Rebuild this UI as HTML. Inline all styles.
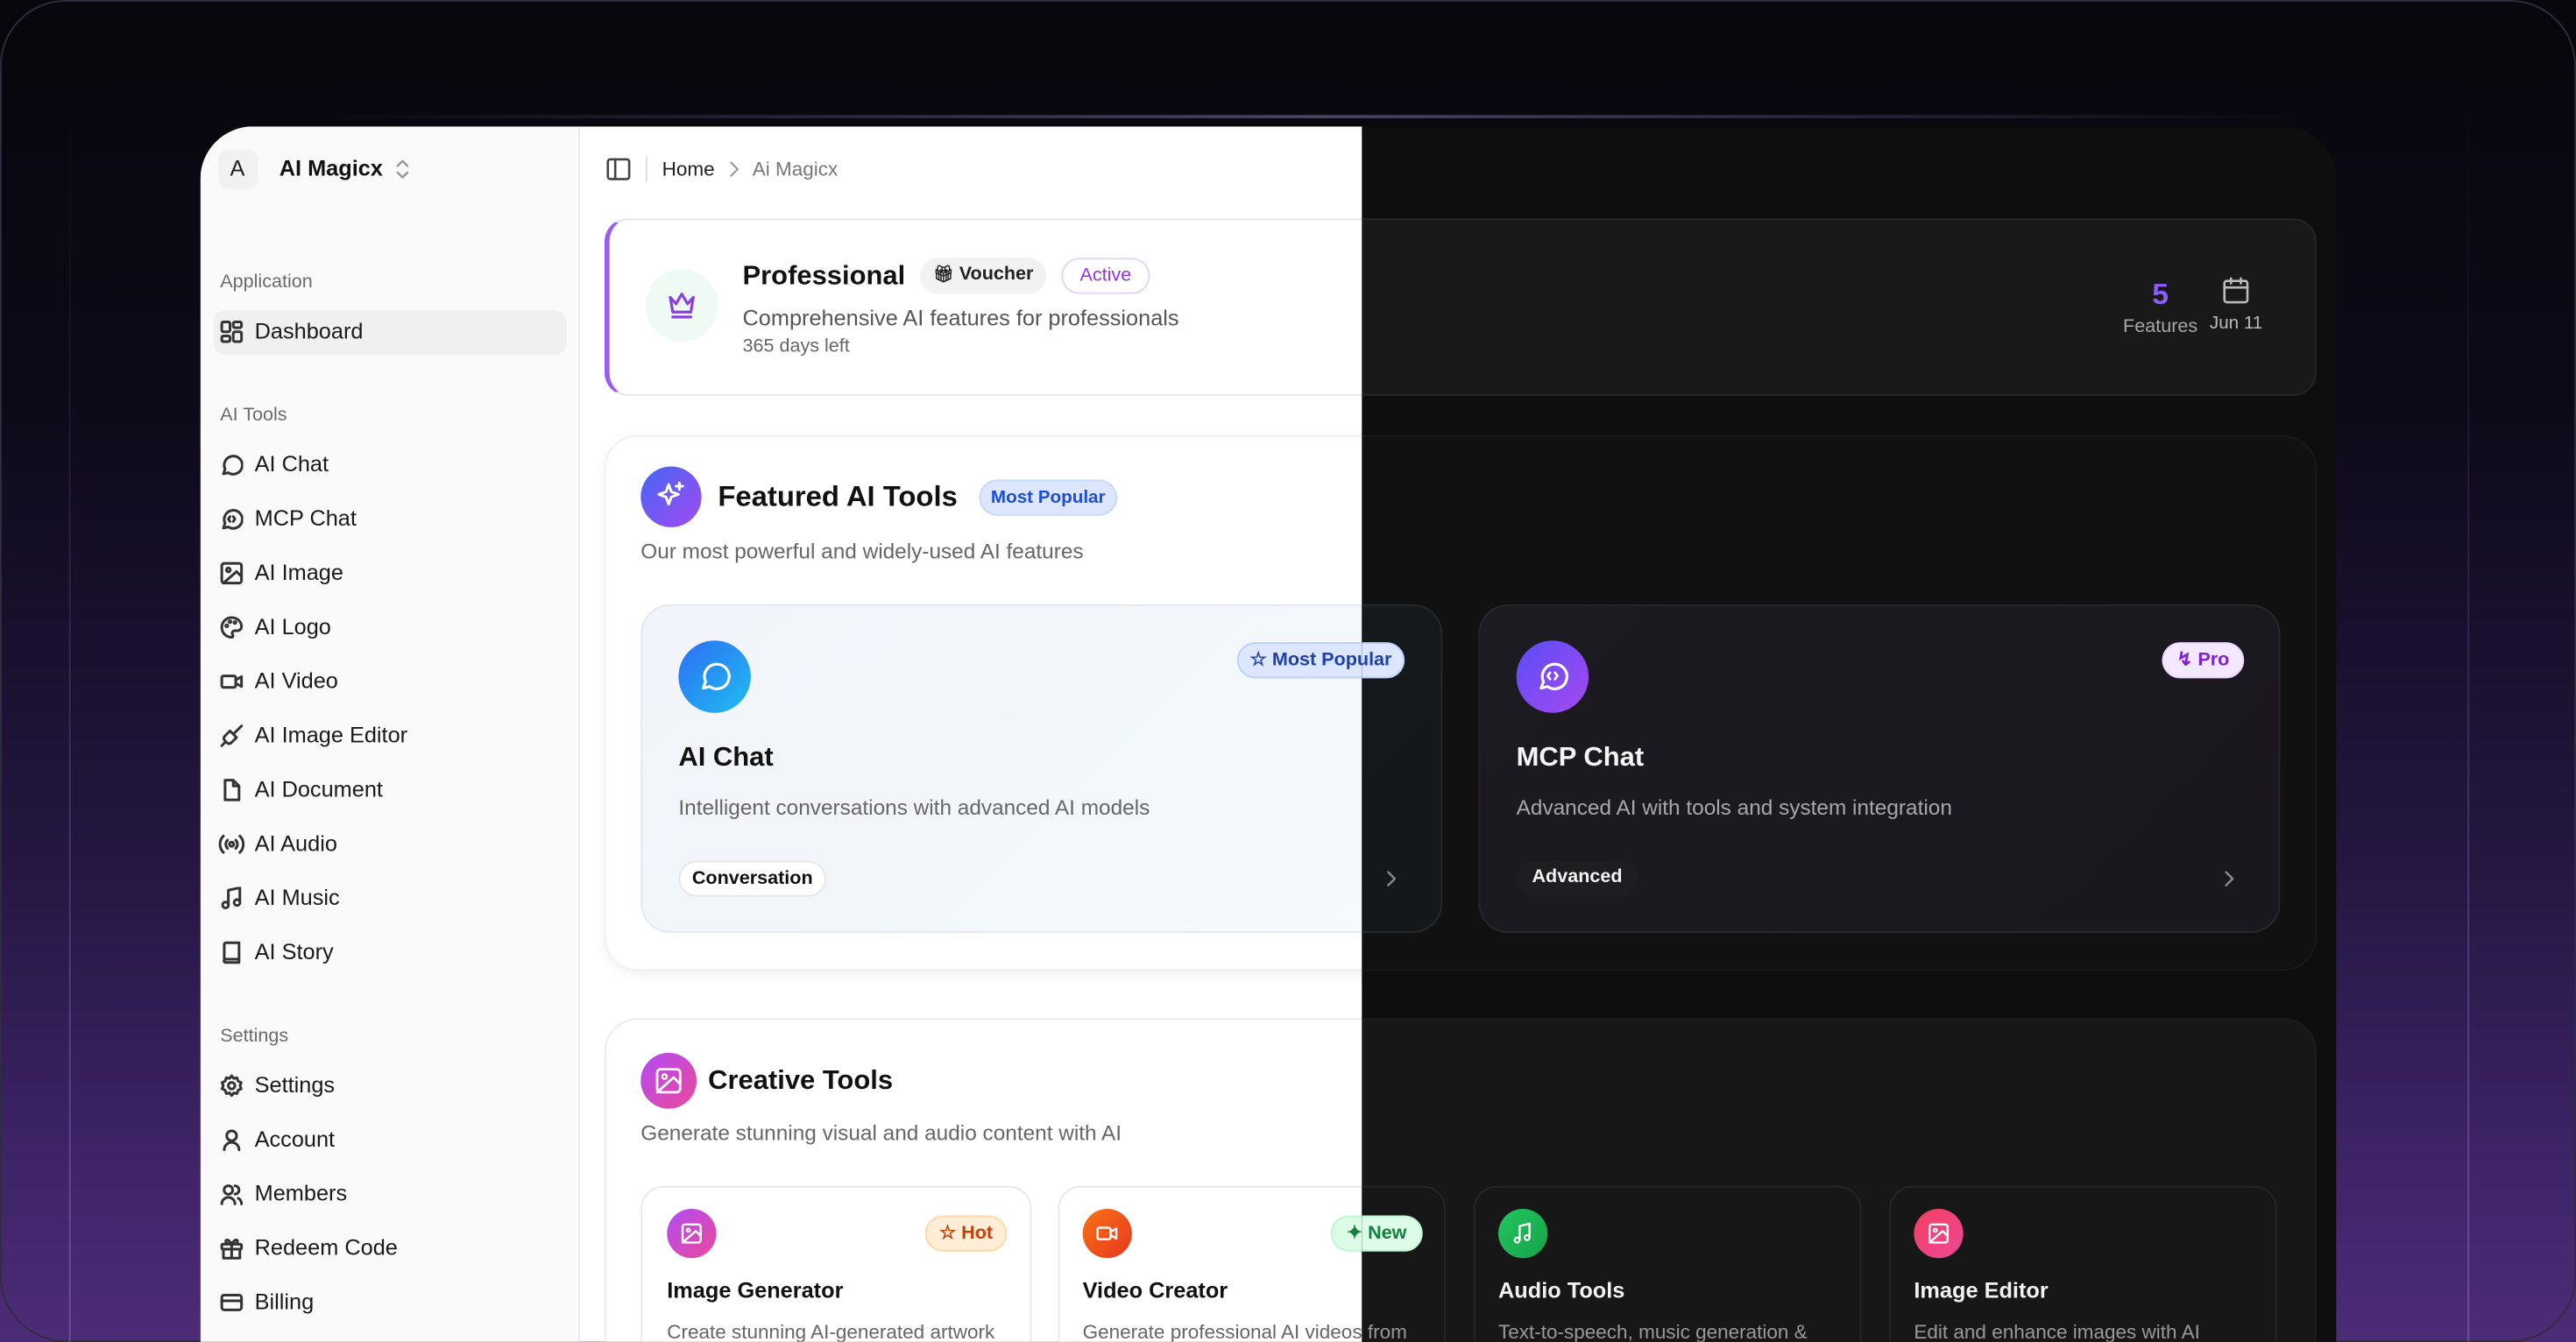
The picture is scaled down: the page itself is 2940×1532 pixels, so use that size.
<!DOCTYPE html>
<html><head><meta charset="utf-8"><style>
*{margin:0;padding:0;box-sizing:border-box}
html,body{width:2940px;height:1532px;overflow:hidden;background:#07070d}
#s{position:absolute;left:0;top:0;width:1568px;height:817px;transform:scale(1.875);transform-origin:0 0;font-family:"Liberation Sans",sans-serif;overflow:hidden;
background:linear-gradient(180deg,#07070d 0%,#0d0a18 30%,#251742 65%,#40256a 88%,#4c2c76 100%)}
.a{position:absolute;white-space:nowrap}
.t{position:absolute;white-space:nowrap;line-height:20px;height:20px}
svg{position:absolute;fill:none;stroke-linecap:round;stroke-linejoin:round}
.frame{position:absolute;left:0;top:0;width:1568px;height:817px;border:1.5px solid #2e2e3e;border-radius:40px}
.vl{position:absolute;top:60px;width:1px;height:757px;background:linear-gradient(180deg,rgba(120,100,170,0),rgba(140,110,190,.55))}
.win{position:absolute;left:122px;top:77px;width:1300px;height:740px;border-radius:32px 32px 0 0;overflow:hidden;background:#0e0e0e}
.light{position:absolute;left:0;top:0;width:707px;height:740px;overflow:hidden;background:#fff}
.dark{position:absolute;left:707px;top:0;width:593px;height:740px;overflow:hidden;background:#0e0e0e}
.inner{position:absolute;left:-122px;top:-77px;width:1568px;height:817px;overflow:hidden}
.dark .inner{left:-829px}
.side{position:absolute;left:122px;top:77px;width:231px;height:740px;background:#fafafa;border-right:1px solid #ebebeb}
.si{font-size:13.5px;color:#1a1a1a}
.sl{font-size:11.5px;color:#6b6b6b}
.ic{stroke:#333;stroke-width:1.6}
.pill{position:absolute;border-radius:11px;font-size:11.5px;font-weight:bold;text-align:center;line-height:20px;height:22px}
.circ{position:absolute;border-radius:50%}
</style></head><body><div id="s">
<div class="frame"></div>
<div class="a" style="left:200px;top:70px;width:1200px;height:2px;background:linear-gradient(90deg,rgba(90,90,120,0),rgba(110,110,150,.6),rgba(90,90,120,0))"></div>
<div class="vl" style="left:42px"></div>
<div class="vl" style="left:1502px"></div>

<div class="win">
<div class="light"><div class="inner">
<div class="side"></div>
<div class="a" style="left:133px;top:91px;width:24px;height:24px;border-radius:6px;background:#f1f1f1"></div>
<div class="t" style="left:140px;top:93px;font-size:13.5px;color:#222">A</div>
<div class="t" style="left:170px;top:93px;font-size:13.5px;font-weight:bold;color:#111">AI Magicx</div>
<svg style="left:240px;top:96px" width="10" height="14" viewBox="0 0 10 14"><path d="M2 5l3-3 3 3M2 9l3 3 3-3" stroke="#999" stroke-width="1.3"/></svg>

<div class="t sl" style="left:134px;top:162px">Application</div>
<div class="a" style="left:130px;top:189px;width:215px;height:27px;background:#f0f0f0;border-radius:7px"></div>
<svg class="ic" style="left:134px;top:195px" width="14" height="14" viewBox="0 0 14 14"><rect x="1" y="1" width="5" height="6" rx="1"/><rect x="8" y="1" width="5" height="3.5" rx="1"/><rect x="8" y="7" width="5" height="6" rx="1"/><rect x="1" y="9.5" width="5" height="3.5" rx="1"/></svg>
<div class="t si" style="left:155px;top:192px;font-weight:500">Dashboard</div>

<div class="t sl" style="left:134px;top:243px">AI Tools</div>
<svg class="ic" style="left:134px;top:276px" width="14" height="14" viewBox="0 0 14 14"><path d="M2 12.5l1-3A5.5 5.5 0 1 1 5 11.8z"/></svg>
<div class="t si" style="left:155px;top:273px">AI Chat</div>
<svg class="ic" style="left:134px;top:309px" width="14" height="14" viewBox="0 0 14 14"><path d="M2 12.5l1-3A5.5 5.5 0 1 1 5 11.8z"/><path d="M6 5.5l-1 1.5 1 1.5M8 5.5l1 1.5-1 1.5"/></svg>
<div class="t si" style="left:155px;top:306px">MCP Chat</div>
<svg class="ic" style="left:134px;top:342px" width="14" height="14" viewBox="0 0 14 14"><rect x="1" y="1" width="12" height="12" rx="1.5"/><circle cx="5" cy="5" r="1.2"/><path d="M13 9l-3-3-8 7"/></svg>
<div class="t si" style="left:155px;top:339px">AI Image</div>
<svg class="ic" style="left:134px;top:375px" width="14" height="14" viewBox="0 0 14 14"><path d="M7 1a6 6 0 1 0 0 12c1 0 1-1 .5-1.8S7.6 9 9 9h1.5A2.5 2.5 0 0 0 13 6.5C13 3.5 10.3 1 7 1z"/><circle cx="4" cy="6" r=".6"/><circle cx="6" cy="3.5" r=".6"/><circle cx="9" cy="4" r=".6"/></svg>
<div class="t si" style="left:155px;top:372px">AI Logo</div>
<svg class="ic" style="left:134px;top:408px" width="14" height="14" viewBox="0 0 14 14"><rect x="1" y="3.5" width="8.5" height="7" rx="1.2"/><path d="M9.5 6l3.5-2v6l-3.5-2"/></svg>
<div class="t si" style="left:155px;top:405px">AI Video</div>
<svg class="ic" style="left:134px;top:441px" width="14" height="14" viewBox="0 0 14 14"><path d="M13 1L8 6M6 4l4 4-3 3c-1 1-2 1-3 0L3 10c-1-1-1-2 0-3zM3 11l-2 2"/></svg>
<div class="t si" style="left:155px;top:438px">AI Image Editor</div>
<svg class="ic" style="left:134px;top:474px" width="14" height="14" viewBox="0 0 14 14"><path d="M3 1h5l3.5 3.5V13H3zM8 1v3.5h3.5"/></svg>
<div class="t si" style="left:155px;top:471px">AI Document</div>
<svg class="ic" style="left:133px;top:507px" width="16" height="14" viewBox="0 0 16 14"><circle cx="8" cy="7" r="1.3"/><path d="M5.5 4.5a3.5 3.5 0 0 0 0 5M10.5 4.5a3.5 3.5 0 0 1 0 5M3 2a7 7 0 0 0 0 10M13 2a7 7 0 0 1 0 10"/></svg>
<div class="t si" style="left:155px;top:504px">AI Audio</div>
<svg class="ic" style="left:134px;top:540px" width="14" height="14" viewBox="0 0 14 14"><path d="M5 11V2l7-1.5V9"/><circle cx="3.3" cy="11" r="1.8"/><circle cx="10.3" cy="9.5" r="1.8"/></svg>
<div class="t si" style="left:155px;top:537px">AI Music</div>
<svg class="ic" style="left:134px;top:573px" width="14" height="14" viewBox="0 0 14 14"><path d="M2.5 11.5V2a1 1 0 0 1 1-1h8v12h-8a1 1 0 0 1-1-1.5zM2.5 11h9"/></svg>
<div class="t si" style="left:155px;top:570px">AI Story</div>

<div class="t sl" style="left:134px;top:621px">Settings</div>
<svg class="ic" style="left:134px;top:654px" width="14" height="14" viewBox="0 0 14 14"><circle cx="7" cy="7" r="2"/><path d="M7 1l1.3 1.6 2-.4.6 2 1.9.9-.7 1.9.7 1.9-1.9.9-.6 2-2-.4L7 13l-1.3-1.6-2 .4-.6-2-1.9-.9.7-1.9-.7-1.9 1.9-.9.6-2 2 .4z"/></svg>
<div class="t si" style="left:155px;top:651px">Settings</div>
<svg class="ic" style="left:134px;top:687px" width="14" height="14" viewBox="0 0 14 14"><circle cx="7" cy="4.5" r="3"/><path d="M2.5 13a4.5 4.5 0 0 1 9 0"/></svg>
<div class="t si" style="left:155px;top:684px">Account</div>
<svg class="ic" style="left:134px;top:720px" width="14" height="14" viewBox="0 0 14 14"><circle cx="5" cy="4.5" r="2.6"/><path d="M1 13a4 4 0 0 1 8 0M9 2a2.5 2.5 0 0 1 0 5M11 9.5a4 4 0 0 1 2 3.5"/></svg>
<div class="t si" style="left:155px;top:717px">Members</div>
<svg class="ic" style="left:134px;top:753px" width="14" height="14" viewBox="0 0 14 14"><rect x="1" y="4.5" width="12" height="3" rx=".6"/><path d="M2 7.5V13h10V7.5M7 4.5V13M7 4.5C5 1 3 1.5 3.5 3.3 4 4.5 7 4.5 7 4.5zM7 4.5c2-3.5 4-3 3.5-1.2C10 4.5 7 4.5 7 4.5z"/></svg>
<div class="t si" style="left:155px;top:750px">Redeem Code</div>
<svg class="ic" style="left:134px;top:786px" width="14" height="14" viewBox="0 0 14 14"><rect x="1" y="2.5" width="12" height="9" rx="1.5"/><path d="M1 6h12"/></svg>
<div class="t si" style="left:155px;top:783px">Billing</div>

<svg style="left:369px;top:96px" width="15" height="14" viewBox="0 0 15 14"><rect x="1" y="1" width="13" height="12" rx="1.5" stroke="#444" stroke-width="1.4"/><path d="M5.5 1v12" stroke="#444" stroke-width="1.4"/></svg>
<div class="a" style="left:393px;top:95px;width:1px;height:16px;background:#ddd"></div>
<div class="t" style="left:403px;top:93px;font-size:12px;color:#222">Home</div>
<svg style="left:443px;top:98px" width="8" height="10" viewBox="0 0 8 10"><path d="M2 1l4 4-4 4" stroke="#999" stroke-width="1.2"/></svg>
<div class="t" style="left:458px;top:93px;font-size:12px;color:#777">Ai Magicx</div>

<div class="a" style="left:368px;top:133px;width:1042px;height:108px;border:1px solid #e6e6e6;border-left:3px solid #9b5cf6;border-radius:14px;background:#fff"></div>
<div class="circ" style="left:393px;top:164px;width:44px;height:44px;background:#eefaf3"></div>
<svg style="left:405px;top:176px" width="20" height="20" viewBox="0 0 20 20"><path d="M3 5l3.5 4L10 3l3.5 6L17 5l-1.5 9h-11zM4.5 17h11" stroke="#8b3fe0" stroke-width="1.7"/></svg>
<div class="t" style="left:452px;top:157px;font-size:16.5px;font-weight:bold;color:#111;line-height:22px">Professional</div>
<div class="pill" style="left:560px;top:157px;width:77px;background:#f2f2f2;color:#222;font-weight:bold"><span style="font-size:10px">&#127873;&#xFE0E;</span> Voucher</div>
<div class="pill" style="left:646px;top:157px;width:54px;border:1px solid #e3d4fb;color:#9333ea;font-weight:normal;line-height:20px">Active</div>
<div class="t" style="left:452px;top:184px;font-size:13.5px;color:#555">Comprehensive AI features for professionals</div>
<div class="t" style="left:452px;top:201px;font-size:11.5px;color:#666">365 days left</div>

<div class="a" style="left:368px;top:265px;width:1042px;height:326px;border:1px solid #f0f0f0;border-radius:20px;background:#fff;box-shadow:0 2px 8px rgba(0,0,0,.06)"></div>
<div class="circ" style="left:390px;top:284px;width:37px;height:37px;background:linear-gradient(135deg,#4466f5,#a24bf0)"></div>
<svg style="left:398px;top:292px" width="21" height="21" viewBox="0 0 21 21"><path d="M9 3l1.6 4.4L15 9l-4.4 1.6L9 15l-1.6-4.4L3 9l4.4-1.6zM15.5 2v4M13.5 4h4" stroke="#fff" stroke-width="1.6"/></svg>
<div class="t" style="left:437px;top:291px;font-size:17.5px;font-weight:bold;color:#111;line-height:22px">Featured AI Tools</div>
<div class="pill" style="left:596px;top:292px;width:84px;background:#dce6fe;border:1px solid #c8d7fc;color:#1d4ed8;font-size:11px">Most Popular</div>
<div class="t" style="left:390px;top:326px;font-size:13px;color:#666">Our most powerful and widely-used AI features</div>

<div class="a" style="left:390px;top:368px;width:488px;height:200px;border:1px solid #e3e8f0;border-radius:18px;background:linear-gradient(135deg,#f1f4fa,#f4fafd)"></div>
<div class="circ" style="left:413px;top:390px;width:44px;height:44px;background:linear-gradient(135deg,#2c6ff5,#20bdf0)"></div>
<svg style="left:424px;top:401px" width="22" height="22" viewBox="0 0 22 22"><path d="M4 18l1.5-4A7.5 7.5 0 1 1 8 17z" stroke="#fff" stroke-width="1.7"/></svg>
<div class="pill" style="left:753px;top:391px;width:102px;background:#dce6fe;border:1px solid #bcd0fb;color:#1e40af">&#9734; Most Popular</div>
<div class="t" style="left:413px;top:450px;font-size:16.5px;font-weight:bold;color:#111;line-height:22px">AI Chat</div>
<div class="t" style="left:413px;top:482px;font-size:13px;color:#666">Intelligent conversations with advanced AI models</div>
<div class="pill" style="left:413px;top:524px;width:90px;background:#fff;border:1px solid #e6e6e6;color:#111">Conversation</div>

<div class="a" style="left:368px;top:620px;width:1042px;height:300px;border:1px solid #ececec;border-radius:20px;background:#fff"></div>
<div class="circ" style="left:390px;top:641px;width:34px;height:34px;background:linear-gradient(135deg,#b14cf5,#ec4899)"></div>
<svg style="left:398px;top:649px" width="18" height="18" viewBox="0 0 18 18"><rect x="2" y="2" width="14" height="14" rx="2" stroke="#fff" stroke-width="1.5"/><circle cx="6.5" cy="6.5" r="1.4" stroke="#fff" stroke-width="1.3"/><path d="M16 11l-4-4-10 9" stroke="#fff" stroke-width="1.5"/></svg>
<div class="t" style="left:431px;top:647px;font-size:16.5px;font-weight:bold;color:#111;line-height:22px">Creative Tools</div>
<div class="t" style="left:390px;top:680px;font-size:13px;color:#666">Generate stunning visual and audio content with AI</div>

<div class="a" style="left:390px;top:722px;width:238px;height:150px;border:1px solid #e8e8e8;border-radius:14px;background:#fff"></div>
<div class="circ" style="left:406px;top:736px;width:30px;height:30px;background:linear-gradient(135deg,#b14cf5,#ec4899)"></div>
<svg style="left:414px;top:744px" width="14" height="14" viewBox="0 0 14 14"><rect x="1.5" y="1.5" width="11" height="11" rx="1.5" stroke="#fff" stroke-width="1.3"/><circle cx="5" cy="5" r="1" stroke="#fff" stroke-width="1.1"/><path d="M12.5 8.5l-3-3-8 7" stroke="#fff" stroke-width="1.3"/></svg>
<div class="pill" style="left:563px;top:740px;width:50px;background:#ffedd5;border:1px solid #fed7aa;color:#c2410c">&#9734; Hot</div>
<div class="t" style="left:406px;top:776px;font-size:13.5px;font-weight:bold;color:#111">Image Generator</div>
<div class="t" style="left:406px;top:801px;font-size:12px;color:#666">Create stunning AI-generated artwork</div>

<div class="a" style="left:644px;top:722px;width:236px;height:150px;border:1px solid #e8e8e8;border-radius:14px;background:#fff"></div>
<div class="circ" style="left:659px;top:736px;width:30px;height:30px;background:linear-gradient(135deg,#f97316,#e8361e)"></div>
<svg style="left:667px;top:744px" width="14" height="14" viewBox="0 0 14 14"><rect x="1" y="3.5" width="8" height="7" rx="1.2" stroke="#fff" stroke-width="1.3"/><path d="M9 6l3.5-2v6L9 8" stroke="#fff" stroke-width="1.3"/></svg>
<div class="pill" style="left:810px;top:740px;width:56px;background:#dcfce7;border:1px solid #bbf7d0;color:#15803d">&#10022; New</div>
<div class="t" style="left:659px;top:776px;font-size:13.5px;font-weight:bold;color:#111">Video Creator</div>
<div class="t" style="left:659px;top:801px;font-size:12px;color:#666">Generate professional AI videos from</div>
</div></div>

<div class="dark"><div class="inner">
<div class="a" style="left:368px;top:133px;width:1042px;height:108px;border:1px solid #262626;border-radius:14px;background:#191919"></div>
<div class="t" style="left:1305px;top:168px;font-size:18px;font-weight:bold;color:#8b5cf6;width:20px;text-align:center;line-height:22px">5</div>
<div class="t" style="left:1290px;top:189px;font-size:11.5px;color:#a8a8a8;width:50px;text-align:center">Features</div>
<svg style="left:1352px;top:168px" width="18" height="18" viewBox="0 0 18 18"><rect x="2" y="3" width="14" height="13" rx="1.5" stroke="#bbb" stroke-width="1.4"/><path d="M2 7h14M6 1.5v3M12 1.5v3" stroke="#bbb" stroke-width="1.4"/></svg>
<div class="t" style="left:1345px;top:187px;font-size:11px;color:#bbb">Jun 11</div>

<div class="a" style="left:368px;top:265px;width:1042px;height:326px;border:1px solid #1a1a1a;border-radius:20px;background:#111"></div>
<div class="a" style="left:390px;top:368px;width:488px;height:200px;border:1px solid #252a2e;border-radius:18px;background:linear-gradient(135deg,#171b1e,#14181b)"></div>
<div class="pill" style="left:753px;top:391px;width:102px;background:#dce6fe;border:1px solid #bcd0fb;color:#1e40af">&#9734; Most Popular</div>
<svg style="left:843px;top:529px" width="8" height="12" viewBox="0 0 8 12"><path d="M2 2l4 4-4 4" stroke="#888" stroke-width="1.3"/></svg>

<div class="a" style="left:900px;top:368px;width:488px;height:200px;border:1px solid #28272e;border-radius:18px;background:linear-gradient(135deg,#1c1b21,#19181e)"></div>
<div class="circ" style="left:923px;top:390px;width:44px;height:44px;background:linear-gradient(135deg,#5a4cf6,#a64af0)"></div>
<svg style="left:934px;top:401px" width="22" height="22" viewBox="0 0 22 22"><path d="M4 18l1.5-4A7.5 7.5 0 1 1 8 17z" stroke="#fff" stroke-width="1.7"/><path d="M9.5 8.5L8 10.5l1.5 2M12.5 8.5l1.5 2-1.5 2" stroke="#fff" stroke-width="1.5"/></svg>
<div class="pill" style="left:1316px;top:391px;width:50px;background:#f3e8ff;border:1px solid #e9d5ff;color:#7e22ce">&#8623; Pro</div>
<div class="t" style="left:923px;top:450px;font-size:16.5px;font-weight:bold;color:#f5f5f5;line-height:22px">MCP Chat</div>
<div class="t" style="left:923px;top:482px;font-size:13px;color:#a8a8a8">Advanced AI with tools and system integration</div>
<div class="pill" style="left:923px;top:524px;width:74px;background:#1e1e22;color:#f2f2f2">Advanced</div>
<svg style="left:1353px;top:529px" width="8" height="12" viewBox="0 0 8 12"><path d="M2 2l4 4-4 4" stroke="#888" stroke-width="1.3"/></svg>

<div class="a" style="left:368px;top:620px;width:1042px;height:300px;border:1px solid #1e1e1e;border-radius:20px;background:#171717"></div>
<div class="a" style="left:644px;top:722px;width:236px;height:150px;border:1px solid #262626;border-radius:14px;background:#171717"></div>
<div class="pill" style="left:810px;top:740px;width:56px;background:#dcfce7;border:1px solid #bbf7d0;color:#15803d">&#10022; New</div>
<div class="t" style="left:659px;top:801px;font-size:12px;color:#999">Generate professional AI videos from</div>

<div class="a" style="left:897px;top:722px;width:236px;height:150px;border:1px solid #262626;border-radius:14px;background:#171717"></div>
<div class="circ" style="left:912px;top:736px;width:30px;height:30px;background:linear-gradient(135deg,#22c55e,#16a34a)"></div>
<svg style="left:920px;top:744px" width="14" height="14" viewBox="0 0 14 14"><path d="M5 11V2.5l6-1.5V9" stroke="#fff" stroke-width="1.3"/><circle cx="3.5" cy="11" r="1.5" stroke="#fff" stroke-width="1.2"/><circle cx="9.5" cy="9.5" r="1.5" stroke="#fff" stroke-width="1.2"/></svg>
<div class="t" style="left:912px;top:776px;font-size:13.5px;font-weight:bold;color:#f2f2f2">Audio Tools</div>
<div class="t" style="left:912px;top:801px;font-size:12px;color:#999">Text-to-speech, music generation &amp;</div>

<div class="a" style="left:1150px;top:722px;width:236px;height:150px;border:1px solid #262626;border-radius:14px;background:#171717"></div>
<div class="circ" style="left:1165px;top:736px;width:30px;height:30px;background:linear-gradient(135deg,#f43f5e,#ec4899)"></div>
<svg style="left:1173px;top:744px" width="14" height="14" viewBox="0 0 14 14"><rect x="1.5" y="1.5" width="11" height="11" rx="1.5" stroke="#fff" stroke-width="1.3"/><circle cx="5" cy="5" r="1" stroke="#fff" stroke-width="1.1"/><path d="M12.5 8.5l-3-3-8 7" stroke="#fff" stroke-width="1.3"/></svg>
<div class="t" style="left:1165px;top:776px;font-size:13.5px;font-weight:bold;color:#f2f2f2">Image Editor</div>
<div class="t" style="left:1165px;top:801px;font-size:12px;color:#999">Edit and enhance images with AI</div>
</div></div>
</div>
</div></body></html>
